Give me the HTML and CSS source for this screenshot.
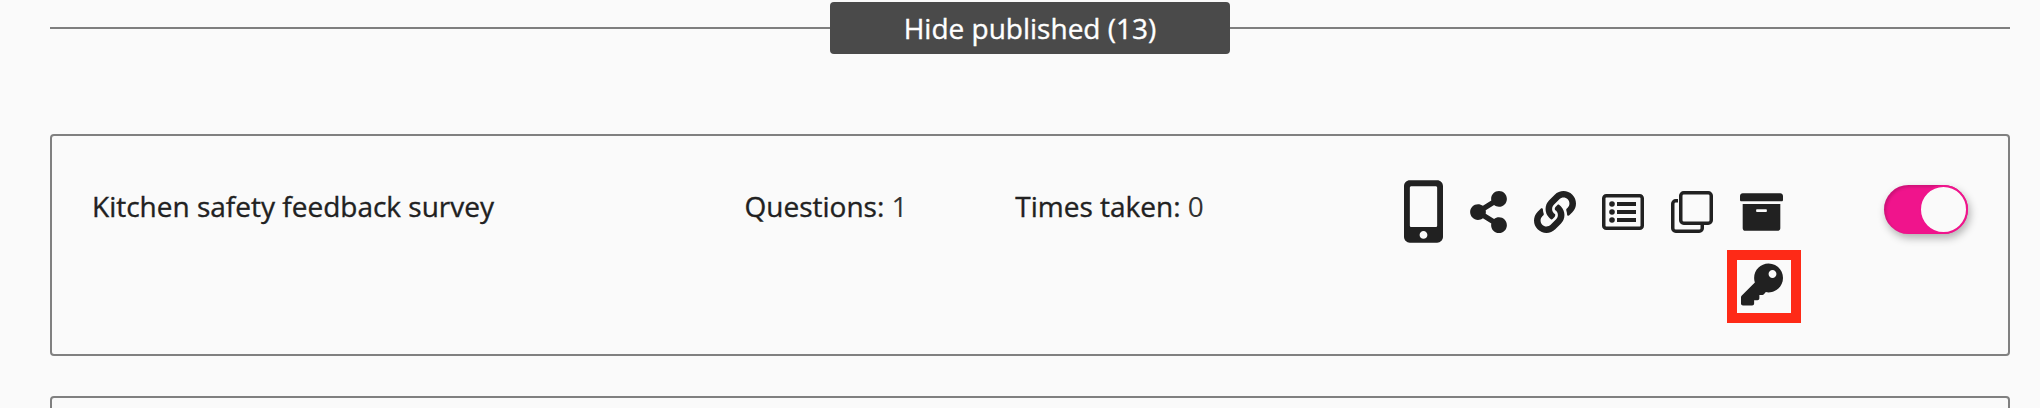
FILE: index.html
```html
<!DOCTYPE html>
<html lang="en">
<head>
  <meta charset="UTF-8"/>
  <title>Surveys</title>
  <link rel="stylesheet" href="styles.css">
</head>
<body>

  <div class="divider">
    <span class="divider-line"></span>
    <button class="toggle-published">Hide published (13)</button>
    <span class="divider-line"></span>
  </div>

  <div class="survey-card">
    <div class="survey-title">Kitchen safety feedback survey</div>
    <div class="survey-stat stat-questions"><span class="stat-label">Questions:</span> 1</div>
    <div class="survey-stat stat-taken"><span class="stat-label">Times taken:</span> 0</div>

    <div class="actions">
      <div class="action-row">
        <!-- mobile -->
        <svg class="icon icon-mobile" viewBox="0 0 320 512"><path d="M272 0H48C21.5 0 0 21.5 0 48v416c0 26.5 21.5 48 48 48h224c26.5 0 48-21.5 48-48V48c0-26.5-21.5-48-48-48zM160 480c-17.7 0-32-14.3-32-32s14.3-32 32-32 32 14.3 32 32-14.3 32-32 32zm112-108c0 6.6-5.4 12-12 12H60c-6.6 0-12-5.4-12-12V60c0-6.6 5.4-12 12-12h200c6.6 0 12 5.4 12 12v312z"/></svg>
        <!-- share -->
        <svg class="icon icon-share" viewBox="0 0 448 512"><path d="M352 320c-22.608 0-43.387 7.819-59.79 20.895l-102.486-64.054a96.551 96.551 0 0 0 0-41.683l102.486-64.054C308.613 184.181 329.392 192 352 192c53.019 0 96-42.981 96-96S405.019 0 352 0s-96 42.981-96 96c0 7.158.79 14.13 2.276 20.841L155.79 180.895C139.387 167.819 118.608 160 96 160c-53.019 0-96 42.981-96 96s42.981 96 96 96c22.608 0 43.387-7.819 59.79-20.895l102.486 64.054A96.301 96.301 0 0 0 256 416c0 53.019 42.981 96 96 96s96-42.981 96-96-42.981-96-96-96z"/></svg>
        <!-- link -->
        <svg class="icon icon-link" viewBox="0 0 512 512"><path d="M326.612 185.391c59.747 59.809 58.927 155.698.36 214.59-.11.12-.24.25-.36.37l-67.2 67.2c-59.27 59.27-155.699 59.262-214.96 0-59.27-59.26-59.27-155.7 0-214.96l37.106-37.106c9.84-9.84 26.786-3.3 27.294 10.606.648 17.722 3.826 35.527 9.69 52.721 1.986 5.822.567 12.262-3.783 16.612l-13.087 13.087c-28.026 28.026-28.905 73.66-1.155 101.96 28.024 28.579 74.086 28.749 102.325.51l67.2-67.19c28.191-28.191 28.073-73.757 0-101.83-3.701-3.694-7.429-6.564-10.341-8.569a16.037 16.037 0 0 1-6.947-12.606c-.396-10.567 3.348-21.456 11.698-29.806l21.054-21.055c5.521-5.521 14.182-6.199 20.584-1.731a152.482 152.482 0 0 1 20.522 17.197zM467.547 44.449c-59.261-59.262-155.69-59.27-214.96 0l-67.2 67.2c-.12.12-.25.25-.36.37-58.566 58.892-59.387 154.781.36 214.59a152.454 152.454 0 0 0 20.521 17.196c6.402 4.468 15.064 3.789 20.584-1.731l21.054-21.055c8.35-8.35 12.094-19.239 11.698-29.806a16.037 16.037 0 0 0-6.947-12.606c-2.912-2.005-6.64-4.875-10.341-8.569-28.073-28.073-28.191-73.639 0-101.83l67.2-67.19c28.239-28.239 74.3-28.069 102.325.51 27.75 28.3 26.872 73.934-1.155 101.96l-13.087 13.087c-4.35 4.35-5.769 10.79-3.783 16.612 5.864 17.194 9.042 34.999 9.69 52.721.509 13.906 17.454 20.446 27.294 10.606l37.106-37.106c59.271-59.259 59.271-155.699.001-214.959z"/></svg>
        <!-- list -->
        <svg class="icon icon-list" viewBox="0 0 42 36">
          <rect class="outline" x="1.75" y="1.75" width="38.5" height="32.5" rx="2.5"/>
          <circle cx="10" cy="10" r="2.8"/><circle cx="10" cy="18" r="2.8"/><circle cx="10" cy="26" r="2.8"/>
          <rect x="15" y="8" width="19" height="4"/><rect x="15" y="16" width="19" height="4"/><rect x="15" y="24" width="19" height="4"/>
        </svg>
        <!-- copy -->
        <svg class="icon icon-copy" viewBox="0 0 42 42">
          <path class="outline" d="M7 9.75H4.75a3 3 0 0 0-3 3v24.5a3 3 0 0 0 3 3h23.5a3 3 0 0 0 3-3V33"/>
          <rect class="outline" x="9.75" y="1.75" width="30.5" height="30.5" rx="3"/>
        </svg>
        <!-- archive -->
        <svg class="icon icon-archive" viewBox="0 0 512 448"><path transform="translate(0 -32)" d="M32 448c0 17.7 14.3 32 32 32h384c17.7 0 32-14.3 32-32V160H32v288zm160-212c0-6.6 5.4-12 12-12h104c6.6 0 12 5.4 12 12v8c0 6.6-5.4 12-12 12H204c-6.6 0-12-5.4-12-12v-8zM480 32H32C14.3 32 0 46.3 0 64v48c0 8.8 7.2 16 16 16h480c8.8 0 16-7.2 16-16V64c0-17.7-14.3-32-32-32z"/></svg>
      </div>
      <div class="key-row">
        <span class="key-mark">
          <svg class="icon icon-key" viewBox="0 0 512 512"><path d="M512 176.001C512 273.203 433.202 352 336 352c-11.22 0-22.19-1.062-32.827-3.069l-24.012 27.014A23.999 23.999 0 0 1 261.223 384H224v40c0 13.255-10.745 24-24 24h-40v40c0 13.255-10.745 24-24 24H24c-13.255 0-24-10.745-24-24v-78.059c0-6.365 2.529-12.47 7.029-16.971l161.802-161.802C163.108 213.814 160 195.271 160 176 160 78.798 238.797.001 335.999 0 433.488-.001 512 78.511 512 176.001zM336 128c0 26.51 21.49 48 48 48s48-21.49 48-48-21.49-48-48-48-48 21.49-48 48z"/></svg>
        </span>
      </div>
    </div>

    <div class="switch"><span class="switch-knob"></span></div>
  </div>

  <div class="survey-card"></div>

</body>
</html>
```

FILE: styles.css
```css
html, body { height: 408px; overflow: hidden; }
body {
  background-color: #fafafa;
  color: #212121;
  font-family: 'Open Sans', 'Noto Sans', sans-serif;
  margin: 0;
  padding: 2px 30px 0 50px;
}

/* Divider */
.divider { display: flex; align-items: center; }
.divider-line { flex: 1; height: 2px; background: #7f7f7f; }
.toggle-published {
  width: 400px; height: 52px;
  background-color: #4a4a4a; color: #fff;
  border: none; border-radius: 4px;
  font-family: inherit; font-size: 28px;
  -webkit-text-stroke: 0.35px #fff;
}

/* Survey card */
.survey-card {
  display: flex; align-items: flex-start;
  box-sizing: border-box;
  height: 222px;
  margin-top: 80px; margin-bottom: 40px;
  padding: 44px 40px 0 40px;
  border: 2px solid #808080;
  border-radius: 4px;
}
.survey-card + .survey-card { margin-top: 0; }
.survey-title { width: 653px; margin-top: 7px; font-size: 28px; line-height: 38px; -webkit-text-stroke: 0.35px #212121; }
.survey-stat { margin-top: 7px; font-size: 28px; line-height: 38px; color: #333; }
.stat-label { color: #212121; -webkit-text-stroke: 0.35px #212121; }
.stat-questions { width: 271px; }
.stat-taken { width: 389px; }

/* Action icons */
.actions { display: flex; flex-direction: column; }
.action-row { display: flex; align-items: center; gap: 27px; }
.icon { display: block; fill: #212121; }
.icon .outline { fill: none; stroke: #212121; stroke-width: 3.5px; }
.icon-mobile { width: 39px; height: 63px; }
.icon-share { width: 37px; height: 42px; }
.icon-link { width: 42px; height: 42px; }
.icon-list { width: 42px; height: 36px; margin-left: -1px; }
.icon-copy { width: 42px; height: 42px; }
.icon-archive { width: 43px; height: 38px; }
.key-row { display: flex; justify-content: flex-end; margin: 7px -18px 0 0; }
.key-mark { padding: 3px 8px 7px 4px; border: 10px solid #fe2a17; }
.icon-key { width: 42px; height: 43px; }

/* Switch */
.switch {
  position: relative;
  flex: none;
  width: 84px; height: 49px;
  margin: 5px 0 0 101px;
  background: #f0148c;
  border-radius: 25px;
  box-shadow: 2px 4px 8px rgba(0,0,0,0.3), inset 2px 2px 3px rgba(0,0,0,0.15);
}
.switch-knob {
  position: absolute; top: 0; right: 0;
  box-sizing: border-box;
  width: 49px; height: 49px;
  background: #fafafa;
  border: 2px solid #f0148c;
  border-radius: 50%;
}
```
